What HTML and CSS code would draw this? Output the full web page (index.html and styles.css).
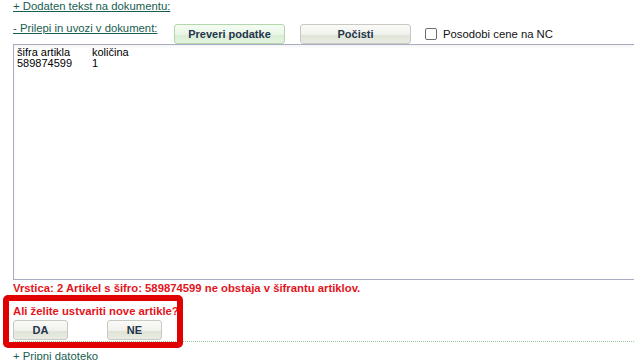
FILE: index.html
```html
<!DOCTYPE html>
<html lang="sl">
<head>
    <meta charset="UTF-8">
    <meta name="viewport" content="width=device-width, initial-scale=1.0">
    <title>Uvoz artiklov</title>
    <link rel="stylesheet" href="styles.css">
</head>
<body>
    <div class="page">
        <a href="#" class="toggle first">+ Dodaten tekst na dokumentu:</a>

        <div class="paste-row">
            <a href="#" class="toggle paste-link">- Prilepi in uvozi v dokument:</a>
            <div class="tools">
                <button class="btn btn-green">Preveri podatke</button>
                <button class="btn btn-plain">Počisti</button>
                <label class="check"><input type="checkbox"> Posodobi cene na NC</label>
            </div>
        </div>

        <textarea class="paste-box" spellcheck="false">šifra artikla	količina
589874599	1</textarea>

        <div class="error">Vrstica: 2 Artikel s šifro: 589874599 ne obstaja v šifrantu artiklov.</div>

        <div class="question">
            <div class="question-text">Ali želite ustvariti nove artikle?</div>
            <div class="answers">
                <button class="btn btn-plain btn-small">DA</button>
                <button class="btn btn-plain btn-small">NE</button>
            </div>
            <div class="highlight"></div>
        </div>

        <div class="attach">
            <a href="#" class="toggle">+ Pripni datoteko</a>
        </div>
    </div>
</body>
</html>
```

FILE: styles.css
```css
html, body {
    margin: 0;
    padding: 0;
    overflow: hidden;
}
body {
    font-family: "Liberation Sans", Arial, sans-serif;
    font-size: 11.3px;
    color: #000;
    background: #fff;
}
.page {
    padding-left: 13px;
    overflow: hidden;
}
.toggle {
    display: inline-block;
    line-height: 13px;
    color: #175e50;
    text-decoration: underline;
}
.first {
    margin-top: -1px;
}
.paste-row {
    display: flex;
    align-items: flex-start;
    margin-top: 9px;
}
.paste-link {
    width: 161px;
    flex-shrink: 0;
}
.tools {
    display: flex;
    align-items: center;
    margin-top: 2px;
    height: 20px;
}
.btn {
    font-family: "Liberation Sans", Arial, sans-serif;
    font-size: 11px;
    font-weight: bold;
    color: #22354a;
    height: 20px;
    padding: 0;
    border-radius: 3px;
    cursor: pointer;
    box-sizing: border-box;
}
.btn-green {
    width: 111px;
    border: 1px solid #b4d6ae;
    background: linear-gradient(#f4fbf2 0%, #e9f6e6 55%, #d9edd4 56%, #e4f2e0 100%);
}
.btn-plain {
    width: 111px;
    margin-left: 15px;
    border: 1px solid #c8c9c2;
    background: linear-gradient(#fafaf8 0%, #f0f1ec 55%, #e0e4d7 56%, #e8ebe2 100%);
}
.check {
    display: flex;
    align-items: center;
    margin-left: 14px;
    color: #111;
}
.check input {
    appearance: none;
    width: 12px;
    height: 12px;
    margin: 0 6px 0 0;
    border: 1px solid #6d6d6d;
    border-radius: 2px;
    background: #fff;
}
.paste-box {
    display: block;
    width: calc(100% + 30px);
    height: 236px;
    box-sizing: border-box;
    margin: 0;
    padding: 2px 3px;
    border: 1px solid #a9adc2;
    border-right: none;
    box-shadow: inset 0 2px 3px rgba(60, 70, 110, 0.06);
    font-family: "Liberation Sans", Arial, sans-serif;
    font-size: 11px;
    line-height: 11px;
    color: #000;
    tab-size: 75px;
    resize: none;
    outline: none;
}
.error {
    margin-top: 1px;
    line-height: 14px;
    font-weight: bold;
    color: #e3141c;
}
.question {
    position: relative;
    margin-top: 9px;
}
.question-text {
    line-height: 14px;
    font-weight: bold;
    color: #e3141c;
}
.answers {
    display: flex;
    margin-top: 2px;
}
.btn-small {
    width: 55px;
    margin-left: 0;
    margin-right: 39px;
}
/* red frame drawn over the question */
.highlight {
    position: absolute;
    left: -10px;
    top: -9px;
    width: 180px;
    height: 53px;
    box-sizing: border-box;
    border: 6px solid #e10000;
    border-radius: 5px;
    pointer-events: none;
}
.attach {
    margin-top: 1px;
    border-top: 1px dotted #98c896;
    padding-top: 8px;
}
```
